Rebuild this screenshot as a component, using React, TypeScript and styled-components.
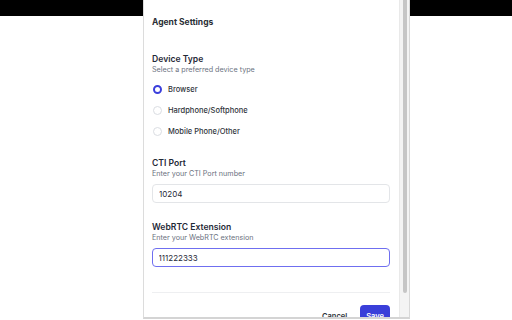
import React, { useState } from 'react'
import styled, { createGlobalStyle, css } from 'styled-components'

const GlobalStyle = createGlobalStyle`
  html, body {
    margin: 0;
    padding: 0;
  }
  body {
    width: 512px;
    height: 320px;
    overflow: hidden;
    background: linear-gradient(#000 0 16px, #fff 16px);
    font-family: Inter, "Liberation Sans", sans-serif;
  }
`

const Panel = styled.div`
  margin-left: 143px;
  width: 265px;
  height: 317px;
  display: flex;
  background: #fff;
  border-left: 1px solid #dcdcdc;
  border-right: 1px solid #d8d8d8;
  border-bottom: 2px solid #d4d4d4;
  overflow: hidden;
`

const Scroller = styled.div`
  flex: 1;
  min-width: 0;
  overflow: hidden;
`

const ScrollTrack = styled.div`
  width: 10px;
  flex-shrink: 0;
  box-sizing: border-box;
  padding: 0 2px 0 3px;
  background: #f4f4f4;
  border-left: 1px solid #e9e9e9;
`

const ScrollThumb = styled.div`
  height: 293px;
  background: #c6c6c6;
  border-radius: 0 0 3px 3px;
`

const Content = styled.div`
  padding: 0 9px 0 8px;
  display: flex;
  flex-direction: column;
`

const Header = styled.h2`
  margin: 0;
  height: 44px;
  display: flex;
  align-items: center;
  font-size: 8.5px;
  font-weight: 700;
  color: #2b2f36;
`

const Section = styled.section<{ $gap?: number }>`
  display: flex;
  flex-direction: column;
  margin-top: ${p => p.$gap ?? 0}px;
`

const Title = styled.div`
  font-size: 8.6px;
  line-height: 12px;
  font-weight: 600;
  color: #1f2937;
`

const Hint = styled.div`
  font-size: 7.2px;
  line-height: 10px;
  color: #6b7280;
`

const RadioList = styled.div`
  display: flex;
  flex-direction: column;
  margin-top: 4px;
`

const RadioRow = styled.label`
  height: 21px;
  display: flex;
  align-items: center;
  gap: 6px;
  cursor: pointer;
`

const Dot = styled.span<{ $checked: boolean }>`
  width: 9px;
  height: 9px;
  margin-left: 1px;
  border-radius: 50%;
  box-sizing: border-box;
  border: 1px solid #dadde2;
  background: #fff;
  ${p => p.$checked && css`
    border: 2.5px solid #3b3fdc;
  `}
`

const RadioLabel = styled.span`
  font-size: 7.5px;
  font-weight: 500;
  color: #2f343b;
`

const Input = styled.input<{ $focused?: boolean }>`
  margin-top: 5px;
  height: 19px;
  box-sizing: border-box;
  width: 100%;
  border: 1px solid #e3e5e8;
  border-radius: 4px;
  padding: 0 6px;
  font-family: inherit;
  font-size: 8px;
  color: #1f2937;
  outline: none;
  ${p => p.$focused && css`
    border: 1.5px solid #6f6ff0;
    padding: 0 5.5px;
  `}
`

const Divider = styled.hr`
  margin: 25px 0 0;
  border: 0;
  border-top: 1px solid #eeeff1;
`

const Footer = styled.div`
  display: flex;
  justify-content: flex-end;
  align-items: center;
  gap: 13px;
  padding: 12px 0 12px;
`

const Button = styled.button<{ $primary?: boolean }>`
  height: 22px;
  border: 0;
  border-radius: 4px;
  font-family: inherit;
  font-size: 7.5px;
  font-weight: 600;
  background: transparent;
  color: #2f343b;
  padding: 0;
  ${p => p.$primary && css`
    background: #3a3fd9;
    color: #fff;
    padding: 0 6px;
  `}
`

const options = ['Browser', 'Hardphone/Softphone', 'Mobile Phone/Other']

export default function App() {
  const [device, setDevice] = useState('Browser')
  const [port, setPort] = useState('10204')
  const [ext, setExt] = useState('111222333')

  return (
    <>
      <GlobalStyle />
      <Panel>
        <Scroller>
          <Content>
            <Header>Agent Settings</Header>
            <Section $gap={9}>
              <Title>Device Type</Title>
              <Hint>Select a preferred device type</Hint>
              <RadioList>
                {options.map(o => (
                  <RadioRow key={o} onClick={() => setDevice(o)}>
                    <Dot $checked={device === o} />
                    <RadioLabel>{o}</RadioLabel>
                  </RadioRow>
                ))}
              </RadioList>
            </Section>
            <Section $gap={15}>
              <Title>CTI Port</Title>
              <Hint>Enter your CTI Port number</Hint>
              <Input value={port} onChange={e => setPort(e.target.value)} />
            </Section>
            <Section $gap={18}>
              <Title>WebRTC Extension</Title>
              <Hint>Enter your WebRTC extension</Hint>
              <Input $focused value={ext} onChange={e => setExt(e.target.value)} />
            </Section>
            <Divider />
            <Footer>
              <Button>Cancel</Button>
              <Button $primary>Save</Button>
            </Footer>
          </Content>
        </Scroller>
        <ScrollTrack>
          <ScrollThumb />
        </ScrollTrack>
      </Panel>
    </>
  )
}
